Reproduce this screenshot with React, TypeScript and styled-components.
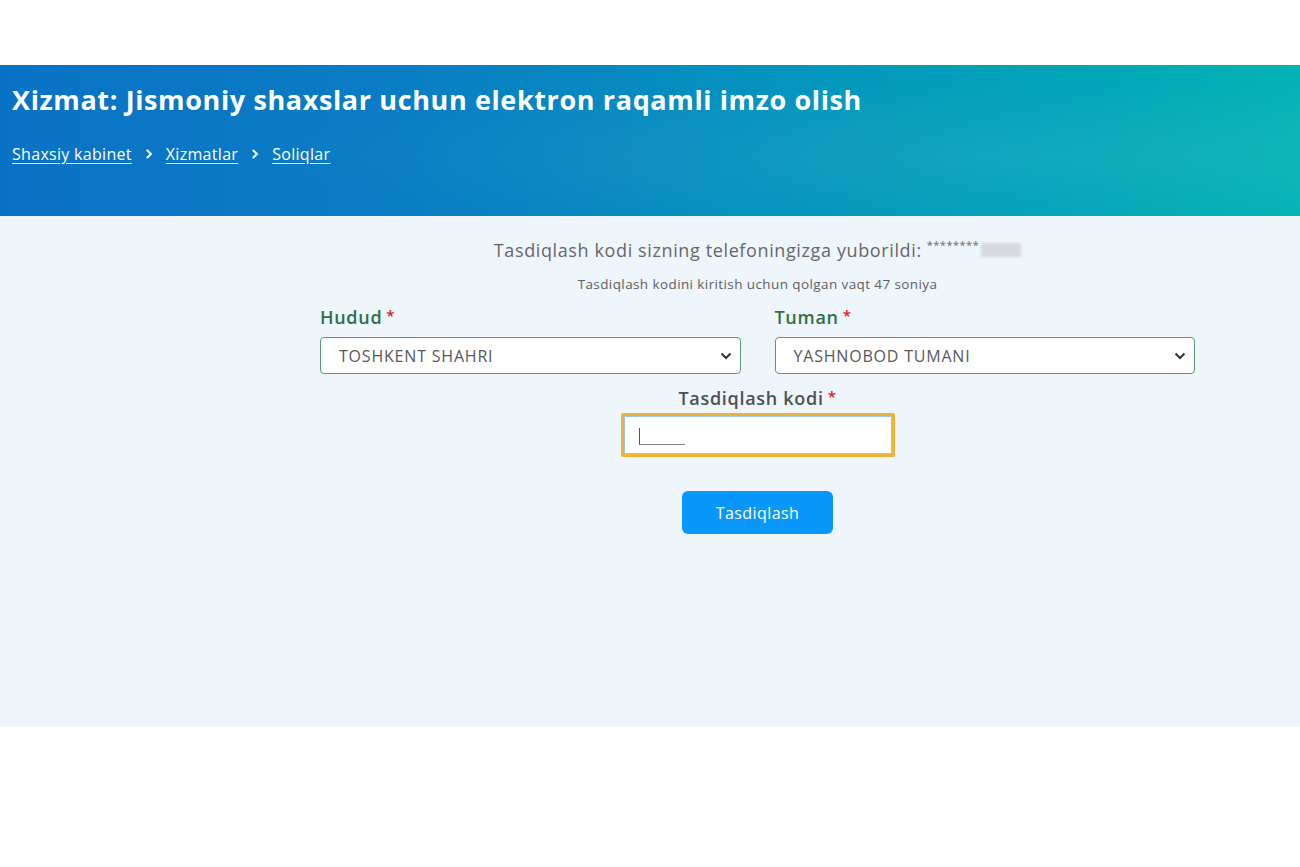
import React from "react";
import styled, { createGlobalStyle } from "styled-components";

const Global = createGlobalStyle`
  html, body { margin: 0; padding: 0; background: #ffffff; }
  body { font-family: "Open Sans", "Noto Sans", Arial, sans-serif; }
  * { box-sizing: border-box; }
`;

const Page = styled.div`
  padding-top: 65px;
  width: 1300px;
  height: 867px;
  background: #ffffff;
`;

const Banner = styled.header`
  height: 151px;
  padding: 19px 12px 0;
  background:
    radial-gradient(ellipse at 78% 60%, rgba(255,255,255,0.06), transparent 55%),
    linear-gradient(90deg, #0a72c6 0%, #0a7cc4 30%, #0594be 60%, #02a7b8 85%, #05b3b6 100%);
  color: #ffffff;
`;

const Title = styled.h1`
  margin: 0;
  font-size: 27px;
  font-weight: 700;
  line-height: 32px;
  letter-spacing: 0.62px;
`;

const Crumbs = styled.nav`
  display: flex;
  align-items: center;
  gap: 10px;
  margin-top: 27px;
  font-size: 16px;
  letter-spacing: 0.3px;
`;

const Crumb = styled.a`
  color: #ffffff;
  text-decoration: underline;
  text-underline-offset: 3px;
  cursor: pointer;
`;

const Sep = styled.span`
  display: inline-flex;
  padding: 0 2px;
`;

const Main = styled.main`
  height: 511px;
  background: #eef5fb;
  padding: 21px 0 0 215px;
  display: flex;
  flex-direction: column;
  align-items: center;
`;

const Sent = styled.p`
  margin: 0 0 0 0;
  font-size: 18px;
  letter-spacing: 0.62px;
  color: #676767;
  display: flex;
  align-items: center;
  line-height: 26px;
`;

const Stars = styled.span`
  font-size: 11px;
  letter-spacing: 0.5px;
  margin-left: 5px;
  align-self: flex-start;
  line-height: 16px;
`;

const Blur = styled.span`
  display: inline-block;
  width: 40px;
  height: 14px;
  margin-left: 2px;
  background: #d6d9de;
  filter: blur(1.5px);
`;

const Timer = styled.p`
  margin: 12px 0 0 0;
  font-size: 13.5px;
  letter-spacing: 0.4px;
  color: #606060;
  line-height: 18px;
`;

const Grid = styled.div`
  width: 875px;
  margin-top: 11px;
  display: grid;
  grid-template-columns: 1fr 1fr;
  column-gap: 34px;
`;

const Field = styled.div`
  display: flex;
  flex-direction: column;
`;

const Label = styled.label<{ $tone?: "green" | "gray" }>`
  font-size: 18px;
  font-weight: 600;
  letter-spacing: 0.7px;
  line-height: 22px;
  color: ${(p) => (p.$tone === "gray" ? "#505050" : "#2f6f47")};
  margin-bottom: ${(p) => (p.$tone === "gray" ? "4px" : "9px")};
`;

const Req = styled.span`
  color: #e8151b;
  margin-left: 4px;
  font-size: 15px;
  vertical-align: 3px;
`;

const Select = styled.div`
  height: 37px;
  border: 1px solid #5b9a70;
  border-radius: 4px;
  background: #ffffff;
  display: flex;
  align-items: center;
  justify-content: space-between;
  padding: 0 8px 0 18px;
  font-size: 16px;
  color: #585858;
  letter-spacing: 0.8px;
`;

const CodeBlock = styled.div`
  margin-top: 11px;
  display: flex;
  flex-direction: column;
  align-items: center;
`;

const CodeInput = styled.div`
  width: 274px;
  height: 44px;
  border: 3px solid #efb233;
  border-radius: 2px;
  background: #ffffff;
  box-shadow: inset 0 0 0 1px #9cc6e6;
  display: flex;
  align-items: center;
  padding-left: 15px;
`;

const Mask = styled.span`
  display: inline-block;
  width: 46px;
  height: 17px;
  border-left: 1px solid #555;
  border-bottom: 1px solid #888;
  margin-top: 2px;
`;

const Button = styled.button`
  margin-top: 34px;
  width: 151px;
  height: 43px;
  border: none;
  border-radius: 6px;
  background: #0a97fb;
  color: #ffffff;
  font-family: inherit;
  font-size: 16px;
  letter-spacing: 0.4px;
  cursor: pointer;
`;

const Chevron = () => (
  <svg width="10" height="12" viewBox="0 0 10 12">
    <path d="M2.8 2 L7 6 L2.8 10" fill="none" stroke="#fff" strokeWidth="2" />
  </svg>
);

const Caret = () => (
  <svg width="12" height="8" viewBox="0 0 12 8">
    <path d="M1.5 1.5 L6 6 L10.5 1.5" fill="none" stroke="#333" strokeWidth="2" />
  </svg>
);

export default function App() {
  return (
    <>
      <Global />
      <Page>
        <Banner>
          <Title>Xizmat: Jismoniy shaxslar uchun elektron raqamli imzo olish</Title>
          <Crumbs>
            <Crumb>Shaxsiy kabinet</Crumb>
            <Sep><Chevron /></Sep>
            <Crumb>Xizmatlar</Crumb>
            <Sep><Chevron /></Sep>
            <Crumb>Soliqlar</Crumb>
          </Crumbs>
        </Banner>
        <Main>
          <Sent>
            Tasdiqlash kodi sizning telefoningizga yuborildi:
            <Stars>********</Stars>
            <Blur />
          </Sent>
          <Timer>Tasdiqlash kodini kiritish uchun qolgan vaqt 47 soniya</Timer>
          <Grid>
            <Field>
              <Label>Hudud<Req>*</Req></Label>
              <Select>
                TOSHKENT SHAHRI
                <Caret />
              </Select>
            </Field>
            <Field>
              <Label>Tuman<Req>*</Req></Label>
              <Select>
                YASHNOBOD TUMANI
                <Caret />
              </Select>
            </Field>
          </Grid>
          <CodeBlock>
            <Label $tone="gray">Tasdiqlash kodi<Req>*</Req></Label>
            <CodeInput>
              <Mask />
            </CodeInput>
            <Button>Tasdiqlash</Button>
          </CodeBlock>
        </Main>
      </Page>
    </>
  );
}
